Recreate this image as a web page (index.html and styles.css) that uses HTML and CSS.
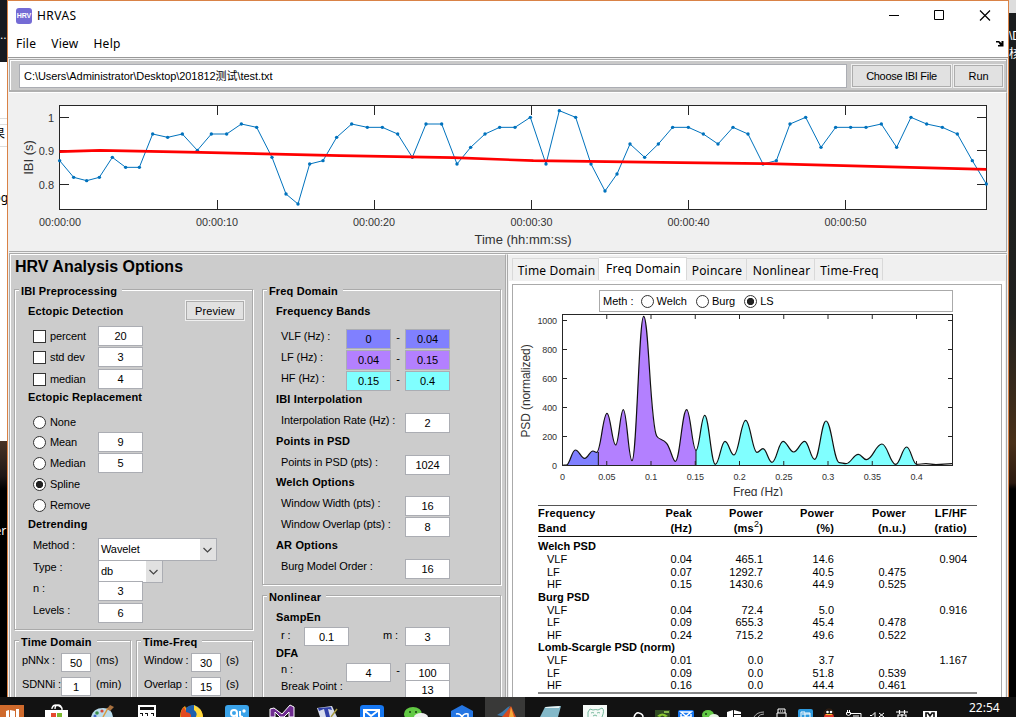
FILE: index.html
```html
<!DOCTYPE html>
<html lang="en">
<head>
<meta charset="utf-8">
<title>HRVAS</title>
<link rel="stylesheet" href="styles.css">
</head>
<body>
<div class="desktop">
  <div class="strip strip-left">
    <div class="seg dark"><span>..</span></div>
    <div class="seg light"><span class="frag-a">果</span><span class="frag-b">og</span></div>
    <div class="seg night"><span>er</span></div>
  </div>
  <div class="strip strip-right">
    <div class="seg pale"></div>
    <div class="seg console"><span>\D</span><span>核</span></div>
  </div>

  <main class="window">
    <header class="titlebar">
      <span class="logo">HRV</span><span class="title">HRVAS</span>
      <svg class="controls" width="110" height="28" viewBox="0 0 110 28" fill="none" stroke="#000" stroke-width="1">
        <path d="M5 13.500h10M50.500 8.500h9v9h-9z"/><path d="M96 8.500l10 10M106 8.500l-10 10" stroke-width="1.200"/>
      </svg>
    </header>
    <nav class="menubar"><span>File</span><span>View</span><span>Help</span>
      <svg class="dock" width="8" height="7" viewBox="0 0 8 7"><path d="M0 1h3l2.500 2V1H7.500v5.500H2V5h2L2.500 2.500H0z" fill="#000"/></svg>
    </nav>
    <section class="filebar">
      <div class="path">C:\Users\Administrator\Desktop\201812测试\test.txt</div>
      <button class="btn choose">Choose IBI File</button>
      <button class="btn run">Run</button>
    </section>
    <section class="ibi">
      <svg id="ibi-chart" width="998" height="158" viewBox="9 93 998 158"></svg>
    </section>

    <div class="lower">
      <section class="options">
        <h1>HRV Analysis Options</h1>
        <div class="columns">
          <div class="col">
            <div class="group pre">
              <b class="legend">IBI Preprocessing</b>
              <div class="row head"><b>Ectopic Detection</b><button class="btn preview">Preview</button></div>
              <div class="row"><i class="check"></i><label>percent</label><span class="field">20</span></div>
              <div class="row"><i class="check"></i><label>std dev</label><span class="field">3</span></div>
              <div class="row"><i class="check"></i><label>median</label><span class="field">4</span></div>
              <div class="row head"><b>Ectopic Replacement</b></div>
              <div class="row"><i class="radio"></i><label>None</label></div>
              <div class="row"><i class="radio"></i><label>Mean</label><span class="field">9</span></div>
              <div class="row"><i class="radio"></i><label>Median</label><span class="field">5</span></div>
              <div class="row"><i class="radio on"></i><label>Spline</label></div>
              <div class="row"><i class="radio"></i><label>Remove</label></div>
              <div class="row head"><b>Detrending</b></div>
              <div class="row tall"><label class="up">Method :</label><span class="select wide">Wavelet<svg width="16" height="21" viewBox="0 0 16 21"><path d="M3.500 9l4 4 4-4" fill="none" stroke="#444" stroke-width="1.200"/></svg></span></div>
              <div class="row tall"><label class="up">Type :</label><span class="select">db<svg width="16" height="21" viewBox="0 0 16 21"><path d="M3.500 9l4 4 4-4" fill="none" stroke="#444" stroke-width="1.200"/></svg></span></div>
              <div class="row"><label class="up">n :</label><span class="field">3</span></div>
              <div class="row"><label class="up">Levels :</label><span class="field">6</span></div>
            </div>
            <div class="pair">
              <div class="group small td">
                <b class="legend">Time Domain</b>
                <div class="row"><label>pNNx :</label><span class="field">50</span><label class="unit">(ms)</label></div>
                <div class="row"><label>SDNNi :</label><span class="field">1</span><label class="unit">(min)</label></div>
              </div>
              <div class="group small tf">
                <b class="legend">Time-Freq</b>
                <div class="row"><label>Window :</label><span class="field">30</span><label class="unit">(s)</label></div>
                <div class="row"><label>Overlap :</label><span class="field">15</span><label class="unit">(s)</label></div>
              </div>
            </div>
          </div>
          <div class="col">
            <div class="group freq">
              <b class="legend">Freq Domain</b>
              <div class="row head"><b>Frequency Bands</b></div>
              <div class="row"><label class="up">VLF (Hz) :</label><span class="field vlf">0</span><em>-</em><span class="field vlf">0.04</span></div>
              <div class="row"><label class="up">LF (Hz) :</label><span class="field lf">0.04</span><em>-</em><span class="field lf">0.15</span></div>
              <div class="row"><label class="up">HF (Hz) :</label><span class="field hf">0.15</span><em>-</em><span class="field hf">0.4</span></div>
              <div class="row head"><b>IBI Interpolation</b></div>
              <div class="row"><label class="up">Interpolation Rate (Hz) :</label><span class="field">2</span></div>
              <div class="row head"><b>Points in PSD</b></div>
              <div class="row"><label class="up">Points in PSD (pts) :</label><span class="field">1024</span></div>
              <div class="row head"><b>Welch Options</b></div>
              <div class="row"><label class="up">Window Width (pts) :</label><span class="field">16</span></div>
              <div class="row"><label class="up">Window Overlap (pts) :</label><span class="field">8</span></div>
              <div class="row head"><b>AR Options</b></div>
              <div class="row"><label class="up">Burg Model Order :</label><span class="field">16</span></div>
            </div>
            <div class="group nonlin">
              <b class="legend">Nonlinear</b>
              <div class="row head"><b>SampEn</b></div>
              <div class="row samp"><label class="up r">r :</label><span class="field">0.1</span><label class="up m">m :</label><span class="field">3</span></div>
              <div class="row head"><b>DFA</b></div>
              <div class="row"><label class="up">n :</label><span class="field">4</span><em>-</em><span class="field">100</span></div>
              <div class="row"><label class="up">Break Point :</label><span class="field">13</span></div>
            </div>
          </div>
        </div>
      </section>

      <section class="results">
        <div class="tabs"><span class="t1">Time Domain</span><span class="t2 active">Freq Domain</span><span class="t3">Poincare</span><span class="t4">Nonlinear</span><span class="t5">Time-Freq</span></div>
        <div class="sheet">
          <div class="meth"><span>Meth :</span><i class="radio first"></i><span class="welch">Welch</span><i class="radio"></i><span class="burg">Burg</span><i class="radio on"></i><span>LS</span></div>
          <svg id="psd-chart" width="488" height="184" viewBox="513 312 488 184"></svg>
          <table>
            <thead>
              <tr><th>Frequency</th><th>Peak</th><th>Power</th><th>Power</th><th>Power</th><th>LF/HF</th></tr>
              <tr><th>Band</th><th>(Hz)</th><th>(ms<sup>2</sup>)</th><th>(%)</th><th>(n.u.)</th><th>(ratio)</th></tr>
            </thead>
            <tbody>
              <tr class="sec top"><th colspan="6">Welch PSD</th></tr>
              <tr><td>VLF</td><td>0.04</td><td>465.1</td><td>14.6</td><td></td><td>0.904</td></tr>
              <tr><td>LF</td><td>0.07</td><td>1292.7</td><td>40.5</td><td>0.475</td><td></td></tr>
              <tr class="short"><td>HF</td><td>0.15</td><td>1430.6</td><td>44.9</td><td>0.525</td><td></td></tr>
              <tr class="sec"><th colspan="6">Burg PSD</th></tr>
              <tr><td>VLF</td><td>0.04</td><td>72.4</td><td>5.0</td><td></td><td>0.916</td></tr>
              <tr class="short"><td>LF</td><td>0.09</td><td>655.3</td><td>45.4</td><td>0.478</td><td></td></tr>
              <tr><td>HF</td><td>0.24</td><td>715.2</td><td>49.6</td><td>0.522</td><td></td></tr>
              <tr class="sec short"><th colspan="6">Lomb-Scargle PSD (norm)</th></tr>
              <tr><td>VLF</td><td>0.01</td><td>0.0</td><td>3.7</td><td></td><td>1.167</td></tr>
              <tr><td>LF</td><td>0.09</td><td>0.0</td><td>51.8</td><td>0.539</td><td></td></tr>
              <tr class="last"><td>HF</td><td>0.16</td><td>0.0</td><td>44.4</td><td>0.461</td><td></td></tr>
            </tbody>
          </table>
        </div>
      </section>
    </div>
  </main>

  <footer class="taskbar">
    <svg width="960" height="20" viewBox="0 697 960 20">
      <!-- presentation app -->
      <path d="M0 705h24v12H0z" fill="#cf6a2c"/><path d="M6 711l3-1v7H6zM10 710l5 1v6h-5zM16 709h3v8h-3z" fill="#fff"/>
      <!-- store -->
      <path d="M52 709v-1q1-3 4-3t6 3v2M55 709q0-4 3-4t4 4" fill="none" stroke="#fff" stroke-width="1.300"/><path d="M45 710h23v7H45z" fill="#fff"/><path d="M51 713h5v4h-5z" fill="#e64a2e"/><path d="M57 713h5v4h-5z" fill="#7cb82f"/>
      <!-- paint -->
      <path d="M91 717q2-9 12-9 9 0 10 9z" fill="#b9dbea"/><circle cx="97" cy="713" r="1.800" fill="#3a8f4e"/><circle cx="102" cy="711" r="1.600" fill="#d7493b"/><circle cx="95" cy="716" r="1.500" fill="#4266c5"/><path d="M103 717l5-9" stroke="#d99a3e" stroke-width="1.500"/><path d="M107 709l3-4 4 2-4 4z" fill="#a9713f"/>
      <!-- calculator -->
      <path d="M138 705h18v12h-18z" fill="#fff"/><path d="M140 707h14v3h-14zM140 713h3v1h-3zm5 0h3v1h-3zm6 0h3v1h-3zM142 714h1v2h-1zm5 0h1v2h-1zm6 0h1v2h-1z" fill="#111"/>
      <!-- firefox -->
      <path d="M180 717q0-8 5-11l1 2q7-5 13 0 4 4 4 9z" fill="#f2a51d"/><path d="M181 717q-1-6 3-10l2 4 6 2v4z" fill="#e24a20"/><path d="M186 708q3-3 8-3 4 1 6 4l-4 8h-5q1-4-5-5z" fill="#1d5fae"/><path d="M194 705q8 3 9 12h-7q2-4-2-7z" fill="#ffd93b"/>
      <!-- browser tile -->
      <path d="M225 717v-9q0-3 3-3h18q3 0 3 3v9z" fill="#3aa3ea"/><g fill="none" stroke="#fff" stroke-width="2"><circle cx="234" cy="713" r="3"/><path d="M237 713v4M240 711v4q0 2 3 2"/></g><circle cx="244" cy="711" r="1.700" fill="#fff"/>
      <!-- visual studio -->
      <path d="M270 709l4-1 8 6 8-9 4 2v10h-5v-5l-5 5h-4l-5-5v5h-5z" fill="#6f2c91" stroke="#fff" stroke-width="1"/>
      <!-- editor -->
      <path d="M317 708l15-2 5 11h-17z" fill="#d7dcec"/><path d="M318 708l13-1 1 3-4-1 2 8h-4l-2-8-5 2z" fill="#3040a8"/><path d="M331 717l6-8" stroke="#a69a40" stroke-width="1.500"/>
      <!-- mail -->
      <path d="M360 717v-9q0-3 3-3h17q4 0 4 3v9z" fill="#1677f1"/><path d="M364 717v-7h15v7M364 710l7 6 8-6" fill="none" stroke="#fff" stroke-width="2"/>
      <!-- wechat -->
      <ellipse cx="413" cy="714" rx="9" ry="7" fill="#62c944"/><circle cx="410" cy="712" r="1" fill="#15400f"/><circle cx="416" cy="712" r="1" fill="#15400f"/><ellipse cx="421" cy="717" rx="7" ry="4" fill="#eee"/>
      <!-- hexagon -->
      <path d="M451 717v-6l11-6 11 6v6z" fill="#2475e2"/><path d="M456 714q4-1 6 3 2-4 6-3v3" fill="none" stroke="#fff" stroke-width="1.500"/>
      <!-- matlab -->
      <path d="M485 697h40v20h-40z" fill="#393938"/><path d="M497 715l5-3 6-5 2-1-5 11z" fill="#3e78a9"/><path d="M502 717l9-11 5 11z" fill="#d64c20"/><path d="M509 717l2-10 3 10z" fill="#f6aa3a"/>
      <!-- notebook -->
      <path d="M545 707l16-1-3 11h-18z" fill="#83b8c8"/><path d="M546 707l14-1-1 2h-14z" fill="#e9f3f4"/>
      <!-- bear -->
      <path d="M583 705h24v12h-24z" fill="#f5faf7"/><path d="M588 717q-1-6 2-8l3 1q3-1 5 0l4-2q3 2 0 9M591 713q2-1 3 0M597 713q2-1 3 0M593 716q2-2 4 0" fill="none" stroke="#75b89d"/>
      <!-- tray -->
      <path d="M634 717q2-5 5-4 4 1 4 4" fill="none" stroke="#fff" stroke-width="1.500"/>
      <path d="M655 710h15v7h-15z" fill="#304a22"/><path d="M657 716q5-5 11 0l-3 1q-3-3-5 0z" fill="#8bc932"/><path d="M664 711h5v2h-5z" fill="#87b84c"/>
      <path d="M678 717v-5q0-2 2-2h12q2 0 2 2v5z" fill="#1677f1"/><path d="M681 712h10l-5 4zM681 714v3h10v-3" stroke="#fff" stroke-width="1.500" fill="none"/>
      <ellipse cx="708" cy="715" rx="6" ry="5" fill="#62c944"/><ellipse cx="714" cy="717" rx="5" ry="3" fill="#e5f4e1"/><circle cx="706" cy="714" r="1" fill="#163d12"/>
      <path d="M727 712l6-2v7h-6zM734 710l7 2v5h-7z" fill="#fff"/><path d="M734 714h7v1h-7z" fill="#111"/>
      <path d="M754 717q3-5 10-5M758 717q2-3 6-3" fill="none" stroke="#aaa"/>
      <path d="M778 713v-4h7v4M777 717v-4h9v4M780 711h1M782 711h1" fill="none" stroke="#fff"/>
      <path d="M798 717v-6q0-2 2-2h11q2 0 2 2v6z" fill="#2e9ade"/><path d="M801 717v-5h4v5m1-4h4v4M802 714h8" fill="none" stroke="#fff"/>
      <ellipse cx="829" cy="714" rx="5" ry="5" fill="#17130c" stroke="#593018" stroke-width=".5"/><circle cx="827.500" cy="712" r="1.300" fill="#fff"/><circle cx="831" cy="712" r="1.300" fill="#fff"/><path d="M825 714h8l1 3h-10z" fill="#e0392b"/><path d="M826 714h6v1h-6z" fill="#f6bd2d"/>
      <path d="M846.500 712.500h4v2q-2 2-4 0zM847.500 712v-2M849.500 712v-2M851 713.500h10v4M853 716h6" fill="none" stroke="#fff"/>
      <path d="M870 715.500h2l3-3v5M879 713l5 4M884 713l-5 4" fill="none" stroke="#fff"/>
      <path d="M896 712h12M899.500 710v4M904.500 710v4M902 714v3M898 717v-2h8v2" fill="none" stroke="#fff" stroke-width="1.200"/>
      <path d="M923 711h14v6h-14z" fill="#fff"/><path d="M926 717v-4h2l2 3 2-3h2v4" fill="none" stroke="#111" stroke-width="1.600"/>
    </svg>
    <time>22:54</time>
  </footer>
</div>
<script src="charts.js"></script>
</body>
</html>
```
FILE: styles.css
```css
* { box-sizing: border-box; }
body { margin: 0; width: 1016px; height: 717px; overflow: hidden; font: 11px "Liberation Sans", "Noto Sans CJK SC", Arial, sans-serif; letter-spacing: -.1px; color: #000; }
h1, table { margin: 0; }
i, em { font-style: normal; }
.desktop { position: relative; width: 1016px; height: 717px; overflow: hidden; display: flex; justify-content: space-between; background: #111; }
.strip { width: 8px; height: 697px; display: flex; flex-direction: column; overflow: hidden; white-space: nowrap; }
.seg { color: #fff; overflow: hidden; }
.dark { height: 62px; background: #171a20; padding-top: 29px; font-size: 12px; line-height: 12px; }
.light { height: 379px; background: linear-gradient(#fff 56px, #ddd 56px 57px, #fff 57px 62px, #ddd 62px 63px, #fff 63px 84px, #ddd 84px 85px, #fff 85px); color: #000; display: flex; flex-direction: column; align-items: flex-end; padding: 64px 0 0 0; font-size: 12px; line-height: 16px; }
.frag-a { margin-right: 3px; }
.frag-b { margin-top: 47px; font: 12px/18px "Noto Sans", sans-serif; }
.night { flex: 1; background: linear-gradient(#493326, #1e1716 35px, #000 48px); padding-top: 82px; font: 12px/16px "Noto Sans", sans-serif; display: flex; justify-content: flex-end; padding-right: 2px; }
.pale { height: 13px; background: #ddd; }
.console { flex: 1; padding: 14px 0 0 1px; font-size: 12px; line-height: 18px; display: flex; flex-direction: column; background: linear-gradient(#1a1c1e, #20211f 300px, #493019 430px, #2b1a10 470px, #000 476px); }

.window { position: absolute; left: 7px; top: 0; width: 1002px; height: 697px; border: 1px solid #d98246; border-bottom: 0; background: #f0f0f0; overflow: hidden; display: flex; flex-direction: column; }
.titlebar { height: 29px; flex: none; background: #fff; display: flex; align-items: center; padding-left: 8px; font: 12px "Noto Sans", sans-serif; }
.logo { width: 16px; height: 16px; border-radius: 3px; background: #746bd5; color: #fff; font: bold 7px/15px "Liberation Sans", sans-serif; text-align: center; }
.title { margin-left: 5px; flex: 1; letter-spacing: .45px; }
.controls { margin-right: 14px; }
.menubar { height: 28px; flex: none; background: #fff; border-bottom: 1px solid #999; display: flex; align-items: center; padding: 0 4px 0 8px; gap: 15px; font: 12px "Noto Sans", sans-serif; letter-spacing: .25px; }
.dock { margin-left: auto; }
.filebar { height: 33px; flex: none; margin: 1px 1px 0; border: 1px solid #aaa; border-bottom: 2px solid #b0b0b0; box-shadow: inset 1px 1px #fff, 0 1px #fff; background: #c9c9c9; display: flex; align-items: flex-start; padding: 4px 0 0 9px; }
.path { flex: none; width: 828px; height: 24px; border: 1px solid #abadb3; background: #fff; line-height: 22px; padding-left: 4px; font-size: 11px; letter-spacing: -.06px; }
.btn { border: 1px solid #adadad; outline: 1px solid #f0f0f0; background: #e1e1e1; font: 11px "Liberation Sans", sans-serif; padding: 0; color: #000; letter-spacing: -.1px; flex: none; }
.choose { width: 99px; height: 22px; margin: 1px 0 0 5px; letter-spacing: -.3px; }
.run { width: 49px; height: 22px; margin: 1px 0 0 3px; }
.ibi { height: 160px; flex: none; margin: 0 1px; border-top: 1px solid #fff; border-right: 1px solid #aaa; border-bottom: 1px solid #aaa; overflow: hidden; letter-spacing: 0; }
svg { display: block; flex: none; }
.lower { flex: 1; min-height: 0; display: flex; margin: 1px 1px 0; border-top: 1px solid #aaa; border-left: 1px solid #aaa; }

.options { width: 498px; background: #ccc; border-top: 1px solid #fff; border-left: 1px solid #fff; border-right: 1px solid #aaa; padding-left: 3px; overflow: hidden; }
h1 { font: bold 16px/24px "Liberation Sans", sans-serif; padding-left: 1px; height: 34px; white-space: nowrap; letter-spacing: 0; }
.columns { display: flex; gap: 9px; }
.group { position: relative; border: 1px solid #aaa; box-shadow: 1px 1px #fff, inset 1px 1px #fff; display: grid; align-items: end; }
.legend { position: absolute; left: 4px; top: -6px; background: #ccc; padding: 0 5px 0 2px; line-height: 14px; white-space: nowrap; }
b { letter-spacing: .15px; }
.row { height: 20px; display: flex; align-items: center; white-space: nowrap; }
.field { width: 45px; height: 20px; border: 1px solid #abadb3; background: #fff; text-align: center; line-height: 19px; flex: none; }
.up { padding-bottom: 6px; }
.pre { width: 239px; height: 341px; align-content: start; grid-template-rows: 31px 25px 21px 22px 18px 25px 20px 21px 21px 21px 19px 27px 22px 18px 22px; }
.pre .row { padding-left: 18px; }
.pre .row.head { padding: 0 8px 0 13px; justify-content: space-between; }
.pre .row.tall { height: 23px; }
.pre label { width: 48px; margin-left: 4px; }
.pre label.up { width: 65px; margin-left: 0; }
.pre .row.tall label.up { padding-bottom: 9px; }
.preview { width: 58px; height: 19px; margin-bottom: 1px; letter-spacing: .1px; }
.check { width: 13px; height: 13px; border: 1px solid #333; background: #fff; flex: none; }
.radio { width: 13px; height: 13px; border: 1px solid #333; border-radius: 50%; background: #fff; flex: none; }
.radio.on { background: radial-gradient(circle, #222 0 3.300px, #fff 4px); }
.select { width: 65px; height: 23px; border: 1px solid #abadb3; background: #fff; display: flex; justify-content: space-between; padding-left: 2px; line-height: 21px; }
.select svg { background: #e1e1e1; }
.select.wide { width: 119px; }
.pair { display: flex; gap: 5px; margin-top: 10px; }
.small { width: 117px; height: 90px; align-content: start; grid-template-rows: 32px 24px; }
.small .row { padding-left: 7px; align-items: flex-start; }
.small .field { width: 30px; height: 19px; line-height: 18px; }
.small label { width: 39px; line-height: 15px; }
.small label.unit { width: auto; margin-left: 5px; letter-spacing: .1px; }
.tf .row label:first-child { width: 47px; }
.freq { width: 239px; height: 296px; align-content: start; grid-template-rows: 31px 28px 21px 21px 18px 24px 18px 24px 17px 24px 21px 18px 24px; }
.freq .row, .nonlin .row { padding: 0 50px 0 18px; }
.freq .row.head, .nonlin .row.head { padding-left: 13px; }
.freq label, .nonlin label { margin-right: auto; }
em { width: 14px; text-align: center; padding-bottom: 4px; }
.vlf { background: #8080ff; }
.lf { background: #b380ff; }
.hf { background: #80ffff; }
.nonlin { width: 239px; height: 140px; margin-top: 10px; align-content: start; grid-template-rows: 31px 19px 17px 19px 17px; }
.nonlin .field { height: 19px; line-height: 18px; }
.nonlin .samp label { padding-bottom: 3px; }
.nonlin .r { width: 23px; margin-right: 0; }
.nonlin .m { width: 22px; margin: 0 0 0 auto; }

.results { flex: 1; margin-left: 1px; border-left: 1px solid #aaa; border-top: 1px solid #fff; border-right: 1px solid #aaa; background: #f0f0f0; padding: 2px 2px 0 4px; display: flex; flex-direction: column; }
.tabs { display: flex; align-items: flex-end; height: 23px; font: 12px "Noto Sans", sans-serif; flex: none; letter-spacing: .2px; }
.tabs span { height: 22px; border: 1px solid #d9d9d9; border-bottom: 0; border-left: 0; line-height: 23px; padding-left: 2px; text-align: center; white-space: nowrap; }
.tabs .t1 { width: 87px; border-left: 1px solid #d9d9d9; }
.tabs .t2 { width: 88px; }
.tabs .t3 { width: 60px; padding-left: 1px; }
.tabs .t4 { width: 68px; }
.tabs .t5 { width: 68px; }
.tabs .active { height: 23px; background: #fff; line-height: 21px; }
.sheet { flex: 1; background: #fff; border: 1px solid #aaa; border-bottom: 0; outline: 3px solid #fff; overflow: hidden; margin: 4px 2px 0 0; }
.meth { width: 354px; height: 22px; margin: 5px 0 0 86px; border: 1px solid #aaa; display: flex; align-items: center; padding-left: 3px; letter-spacing: 0; }
.meth .radio { margin: 0 3px 0 9px; }
.meth .radio.first { margin-left: 7px; }
table { width: 439px; margin: 9px 0 0 25px; table-layout: fixed; border-collapse: collapse; border-top: 1px solid #555; border-bottom: 2px solid #888; letter-spacing: 0; }
tr { height: 13px; }
.short { height: 12px; }
th, td { padding: 0; text-align: right; line-height: 12px; font-size: 11px; white-space: nowrap; }
th:first-child, td:first-child { text-align: left; }
td:first-child { padding-left: 9px; }
thead tr { height: 15px; }
thead tr + tr { height: 16px; border-bottom: 1px solid #111; }
thead th { letter-spacing: .2px; }
.top { height: 15px; }
.top th { padding-top: 3px; }
.last { height: 13px; }
.last td { padding-bottom: 1px; }
sup { font-size: 9px; line-height: 0; font-weight: normal; }
th:nth-child(1) { width: 104px; }
th:nth-child(2) { width: 50px; }
th:nth-child(3) { width: 71px; }
th:nth-child(4) { width: 71px; }
th:nth-child(5) { width: 72px; }
th:nth-child(6) { width: 71px; padding-right: 10px; }
td:nth-child(6) { padding-right: 10px; }

.taskbar { position: absolute; left: 0; top: 697px; width: 1016px; height: 20px; background: #121212; color: #fff; display: flex; }
.taskbar time { margin-left: 9px; font: 12px/22px "Noto Sans", sans-serif; letter-spacing: 0; }
```
FILE: charts.js
```js
const line = (x1, y1, x2, y2) => `<path d="M${x1} ${y1}L${x2} ${y2}" stroke="#262626" fill="none"/>`;
const text = (x, y, s, size, anchor = 'middle', extra = '') =>
  `<text x="${x}" y="${y}" font-size="${size}" text-anchor="${anchor}" fill="#333" ${extra}>${s}</text>`;

// Inter-beat intervals; plot coordinates in thirds of a pixel
const beats = [[179,482],[221,532],[260,542],[298,532],[337,472],[377,502],[418,502],[458,402],[503,412],[547,402],[592,451],[634,402],[680,402],[724,372],[770,382],[816,472],[858,582],[894,612],[929,492],[969,482],[1010,412],[1055,372],[1102,382],[1147,382],[1193,402],[1237,472],[1278,372],[1325,372],[1371,492],[1412,442],[1455,402],[1499,382],[1545,382],[1591,352],[1638,492],[1678,332],[1727,352],[1773,492],[1815,573],[1851,522],[1890,432],[1934,472],[1975,432],[2018,382],[2065,382],[2110,402],[2154,432],[2199,382],[2244,402],[2289,492],[2329,482],[2370,372],[2417,352],[2463,442],[2507,382],[2552,382],[2598,382],[2644,372],[2690,442],[2733,352],[2780,372],[2827,382],[2872,402],[2917,482],[2959,552]];
const trend = [[179,455],[300,451],[600,457],[1020,467],[1360,473],[1600,482],[2040,488],[2300,491],[2959,508]];
const third = pts => pts.map(([x, y]) => `${(x / 3).toFixed(2)},${(y / 3).toFixed(2)}`).join(' ');
let out = '<rect x="59.5" y="105.500" width="927" height="104" fill="#fff" stroke="#262626"/>';
[217.5, 374.5, 531.5, 688.5, 845.5].forEach(x => { out += line(x, 106, x, 115) + line(x, 200, x, 209); });
[[117.5, '1'], [150.5, '0.9'], [184.5, '0.8']].forEach(([y, s]) => {
  out += line(60, y, 69, y) + line(977, y, 986, y) + text(54, y + 4.5, s, 11, 'end');
});
[60, 217, 374, 531.5, 688.5, 845.5].forEach((x, i) => { out += text(x, 226, `00:00:${i}0`, 10.8); });
out += text(523, 244, 'Time (hh:mm:ss)', 13);
out += text(32.5, 157.5, 'IBI (s)', 13, 'middle', 'transform="rotate(-90 32.5 157.5)"');
out += `<polyline points="${third(beats)}" fill="none" stroke="#0072bd"/>`;
beats.forEach(([x, y]) => { out += `<circle cx="${x / 3}" cy="${y / 3}" r="1.700" fill="#0072bd"/>`; });
out += `<polyline points="${third(trend)}" fill="none" stroke="#f00" stroke-width="2.600"/>`;
document.getElementById('ibi-chart').innerHTML = out;

// Power spectral density turning points, thirds of a pixel from (506, 250)
const psd = [[170,646],[181,645],[208,600],[236,625],[261,603],[272,607],[303,490],[329,585],[352,479],[378,632],[413,199],[462,567],[508,634],[542,479],[570,601],[596,496],[628,643],[657,574],[684,615],[719,511],[753,607],[771,596],[798,637],[831,574],[863,606],[896,574],[926,628],[960,513],[1000,638],[1020,641],[1057,613],[1081,629],[1128,582],[1169,643],[1202,591],[1232,643],[1260,641],[1290,644],[1338,641]];
let d = 'M170 646';
for (let i = 1; i < psd.length; i++) {
  const [x0, y0] = psd[i - 1], [x, y] = psd[i];
  const k = (x - x0) * 0.4;
  if (x === 462) d += 'C428 199 433 525 452 558';
  else if (x === 508) d += 'C460 572 470 565 482 580S500 634 508 634';
  else d += `C${x0 + k} ${y0} ${x - k} ${y} ${x} ${y}`;
}
const area = d + 'L1338 646L170 646Z';
const clip = (id, x, w) => `<clipPath id="${id}"><rect x="${x}" y="190" width="${w}" height="460"/></clipPath>`;
let p = '<rect x="562.500" y="314.500" width="390" height="151" fill="#fff"/><g transform="translate(506 250) scale(.33333)">' +
  clip('v', 170, 107) + clip('l', 277, 293) + clip('h', 570, 662) +
  `<path d="${area}" fill="#8080ff" clip-path="url(#v)"/><path d="${area}" fill="#b380ff" clip-path="url(#l)"/><path d="${area}" fill="#80ffff" clip-path="url(#h)"/>` +
  `<path d="${d}" fill="none" stroke="#111" stroke-width="3.600"/><path d="M277 606V646M570 601V646" stroke="#111" stroke-width="3"/></g>`;
p += '<rect x="562.500" y="314.500" width="390" height="151" fill="none" stroke="#262626"/>';
['0', '0.05', '0.1', '0.15', '0.2', '0.25', '0.3', '0.35', '0.4'].forEach((s, i) => {
  const x = 562.5 + i * 44.25;
  p += text(x, 480, s, 9);
  if (i) p += line(x, 315, x, 319) + line(x, 461, x, 465);
});
[0, 200, 400, 600, 800, 1000].forEach((v, i) => {
  const y = 465.5 - i * 29;
  p += text(557, y + 3, v, 9, 'end');
  if (i) p += line(563, y, 567, y) + line(948, y, 952, y);
});
p += text(758, 496, 'Freq (Hz)', 12);
p += text(530, 391, 'PSD (normalized)', 12, 'middle', 'transform="rotate(-90 530 391)"');
document.getElementById('psd-chart').innerHTML = p;
```
